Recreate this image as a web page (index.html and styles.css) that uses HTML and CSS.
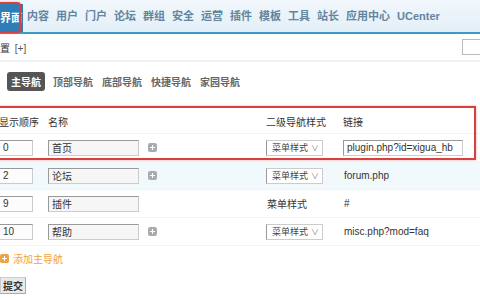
FILE: index.html
```html
<!DOCTYPE html>
<html lang="zh-CN">
<head>
  <meta charset="UTF-8">
  <title>导航设置</title>
  <link rel="stylesheet" href="styles.css">
</head>
<body>
  <div class="topnav">
    <span class="nav-item active">界面</span>
    <span class="nav-item">内容</span>
    <span class="nav-item">用户</span>
    <span class="nav-item">门户</span>
    <span class="nav-item">论坛</span>
    <span class="nav-item">群组</span>
    <span class="nav-item">安全</span>
    <span class="nav-item">运营</span>
    <span class="nav-item">插件</span>
    <span class="nav-item">模板</span>
    <span class="nav-item">工具</span>
    <span class="nav-item">站长</span>
    <span class="nav-item">应用中心</span>
    <span class="nav-item">UCenter</span>
    <div class="mark mark-nav"></div>
  </div>

  <div class="subbar">
    <span class="crumb">置 <em>[+]</em></span>
    <span class="search-box"></span>
  </div>

  <div class="tabs">
    <span class="tab current">主导航</span>
    <span class="tab">顶部导航</span>
    <span class="tab">底部导航</span>
    <span class="tab">快捷导航</span>
    <span class="tab">家园导航</span>
  </div>

  <div class="grid-wrap">
    <div class="row head">
      <span>显示顺序</span>
      <span>名称</span>
      <span>二级导航样式</span>
      <span>链接</span>
    </div>
    <div class="row">
      <span><input class="txt order" value="0"></span>
      <span class="name-cell"><input class="txt name" value="首页"><i class="plus"></i></span>
      <span><span class="sel">菜单样式 <b>&#8744;</b></span></span>
      <span><input class="txt link" value="plugin.php?id=xigua_hb"></span>
    </div>
    <div class="row hover">
      <span><input class="txt order" value="2"></span>
      <span class="name-cell"><input class="txt name" value="论坛"><i class="plus"></i></span>
      <span><span class="sel">菜单样式 <b>&#8744;</b></span></span>
      <span class="plain">forum.php</span>
    </div>
    <div class="row">
      <span><input class="txt order" value="9"></span>
      <span class="name-cell"><input class="txt name" value="插件"></span>
      <span class="plain">菜单样式</span>
      <span class="plain">#</span>
    </div>
    <div class="row">
      <span><input class="txt order" value="10"></span>
      <span class="name-cell"><input class="txt name" value="帮助"><i class="plus"></i></span>
      <span><span class="sel">菜单样式 <b>&#8744;</b></span></span>
      <span class="plain">misc.php?mod=faq</span>
    </div>
    <div class="add-row"><i class="plus orange"></i>添加主导航</div>
    <div class="submit-row"><button class="btn">提交</button></div>
    <div class="mark mark-row"></div>
  </div>
</body>
</html>
```
FILE: styles.css
```css
body {
  margin: 0;
  font-family: "Liberation Sans", "Noto Sans CJK SC", sans-serif;
  font-size: 10px;
  color: #333;
  background: #fff;
  width: 480px;
  height: 300px;
  overflow: hidden;
}

.topnav {
  position: relative;
  display: flex;
  align-items: center;
  height: 32px;
  background: linear-gradient(#f1f7fc, #e3eff8);
  border-bottom: 2px solid #3d9ac4;
  white-space: nowrap;
}

.nav-item {
  font-size: 11px;
  font-weight: bold;
  color: #6385a0;
  margin-right: 7px;
  line-height: 30px;
}

.nav-item.active {
  background: #2e7db6;
  color: #fff;
  padding: 0 1px 0 12px;
  margin-left: -12px;
  margin-right: 4px;
  line-height: 28px;
  margin-top: 3px;
}

.mark {
  position: absolute;
  border: 2px solid #d6403e;
  box-shadow: 0 0 2px rgba(214, 64, 62, 0.5);
}

.mark-nav {
  left: -8px;
  top: 2px;
  width: 25px;
  height: 27px;
  border-radius: 4px;
}

.subbar {
  display: flex;
  justify-content: space-between;
  align-items: center;
  height: 26px;
  border-bottom: 2px solid #eef0f2;
}

.crumb em {
  font-style: normal;
  color: #555;
  margin-left: 2px;
}

.search-box {
  width: 20px;
  height: 14px;
  margin-right: -4px;
  border: 1px solid #bbb;
  background: #fff;
}

.tabs {
  display: flex;
  align-items: center;
  gap: 9px;
  padding: 9px 0 0 7px;
  height: 20px;
}

.tab {
  color: #666;
  font-weight: bold;
}

.tab.current {
  background: #555;
  color: #fff;
  padding: 2px 4px;
  margin-right: -1px;
  border-radius: 3px;
}

.grid-wrap {
  position: relative;
  margin-top: 18px;
  margin-left: -1px;
}

.row {
  display: grid;
  grid-template-columns: 49px 218px 77px 1fr;
  align-items: center;
  height: 27px;
  border-bottom: 1px solid #f1f4f6;
}

.row.head {
  height: 24px;
}

.row.hover {
  background: #f2f9fd;
}

.txt {
  font: inherit;
  color: #333;
  height: 14px;
  padding: 0 3px;
  border: 1px solid #ccc;
  border-top-color: #999;
  border-left-color: #999;
  background: #fcfcfc;
  box-sizing: content-box;
}

.order {
  width: 26px;
}

.name-cell {
  display: flex;
  align-items: center;
}

.name {
  width: 83px;
  background: #f6f6f6;
}

.link {
  width: 112px;
  background: #fff;
}

.plus {
  position: relative;
  display: inline-block;
  width: 9px;
  height: 9px;
  margin-left: 9px;
  border-radius: 2px;
  background: #a9acae;
}

.plus::before,
.plus::after {
  content: "";
  position: absolute;
  background: #fff;
}

.plus::before {
  left: 2px;
  top: 4px;
  width: 5px;
  height: 1px;
}

.plus::after {
  left: 4px;
  top: 2px;
  width: 1px;
  height: 5px;
}

.plus.orange {
  background: #f0a33c;
  margin: 0 4px 0 1px;
}

.sel {
  display: inline-flex;
  align-items: center;
  gap: 3px;
  height: 14px;
  padding: 0 3px 0 5px;
  border: 1px solid #ccc;
  border-left-color: #999;
  background: #fff;
  color: #444;
  font-size: 9px;
}

.sel b {
  font-weight: normal;
  font-size: 8px;
  color: #888;
}

.plain {
  padding-left: 1px;
}

.add-row {
  display: flex;
  align-items: center;
  height: 25px;
  color: #f0a33c;
}

.submit-row {
  padding-top: 6px;
}

.btn {
  font: inherit;
  font-weight: bold;
  color: #333;
  height: 17px;
  padding: 0 2px;
  margin-left: 1px;
  border: 1px solid #aaa;
  border-top-color: #ccc;
  border-left-color: #ccc;
  background: #e9e9e9;
}

.mark-row {
  left: -10px;
  top: -3px;
  width: 483px;
  height: 50px;
}
```
